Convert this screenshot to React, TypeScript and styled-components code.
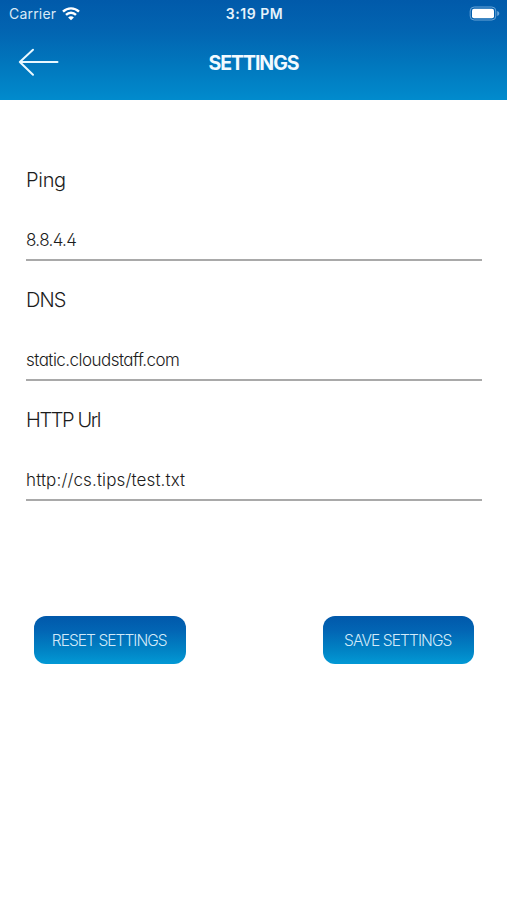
import React from "react";
import styled, { createGlobalStyle } from "styled-components";

const GlobalStyle = createGlobalStyle`
  * { box-sizing: border-box; }
  body { margin: 0; background: #fff; }
`;

const Screen = styled.div`
  width: 507px;
  height: 900px;
  overflow: hidden;
  background: #fff;
  color: #1c1c1c;
  font-family: Inter, "Liberation Sans", sans-serif;
  font-feature-settings: "cv11", "cv02";
`;

const Header = styled.header`
  height: 99.5px;
  color: #fff;
  background: linear-gradient(#015aaa 0%, #0264b1 30%, #0178be 66%, #018bcd 100%);
`;

const StatusBar = styled.div`
  display: grid;
  grid-template-columns: 1fr auto 1fr;
  align-items: center;
  height: 27px;
  padding: 0 7px 0 9px;
`;

const Carrier = styled.div`
  display: flex;
  align-items: center;
  gap: 6px;
  color: #d9e9f6;
  font-size: 14px;
  font-weight: 400;
  font-feature-settings: normal;
  letter-spacing: 0.2px;
  line-height: 27px;
`;

const Clock = styled.div`
  color: #e6f2fb;
  font-size: 14px;
  font-weight: 600;
  letter-spacing: 0.55px;
  line-height: 27px;
`;

const BatteryIcon = styled.svg`
  justify-self: end;
`;

const NavBar = styled.div`
  display: grid;
  grid-template-columns: 1fr auto 1fr;
  align-items: center;
  height: 72px;
  padding: 0 18px;
`;

const BackButton = styled.button`
  display: flex;
  width: 42px;
  height: 30px;
  padding: 0;
  border: 0;
  background: none;
  color: #e9f8ff;
`;

const Title = styled.h1`
  margin: 0;
  color: #f2faff;
  font-size: 19.5px;
  font-weight: 700;
  letter-spacing: -1.05px;
  line-height: 24px;
`;

const Form = styled.main`
  display: flex;
  flex-direction: column;
  padding: 61.5px 25px 0 26px;
`;

const Field = styled.label`
  display: flex;
  flex-direction: column;
  height: 120px;
`;

const FieldName = styled.span<{ $spacing: number }>`
  height: 38px;
  font-size: 20px;
  font-weight: 350;
  letter-spacing: ${(p) => p.$spacing}px;
  line-height: 39px;
`;

const FieldInput = styled.input<{ $spacing: number }>`
  width: 100%;
  height: 62px;
  padding: 22px 0 0;
  border: 0;
  border-bottom: 2px solid #a9a9a9;
  outline: 0;
  background: transparent;
  color: inherit;
  font-family: inherit;
  font-feature-settings: inherit;
  font-size: 17px;
  font-weight: 350;
  letter-spacing: ${(p) => p.$spacing}px;
`;

const Actions = styled.div`
  display: flex;
  justify-content: space-between;
  padding: 95px 8px 0 8px;
`;

const ActionButton = styled.button<{ $spacing: number }>`
  width: 151.5px;
  height: 48px;
  padding: 1px 1px 0 0;
  border: 0;
  border-radius: 12px;
  background: linear-gradient(#0158aa 0%, #0265b4 30%, #0182c4 70%, #0299d5 100%);
  color: #d2eaf9;
  font-family: inherit;
  font-size: 15.5px;
  font-weight: 300;
  letter-spacing: ${(p) => p.$spacing}px;
  white-space: nowrap;
`;

const fields = [
  { name: "Ping", value: "8.8.4.4", nameSpacing: -0.3, valueSpacing: -0.65 },
  { name: "DNS", value: "static.cloudstaff.com", nameSpacing: -0.95, valueSpacing: -0.53 },
  { name: "HTTP Url", value: "http://cs.tips/test.txt", nameSpacing: -1.4, valueSpacing: 0.12 },
];

export default function App() {
  return (
    <Screen>
      <GlobalStyle />
      <Header>
        <StatusBar>
          <Carrier>
            Carrier
            <svg width="18" height="14" viewBox="0 0 18 14" fill="none" stroke="#fff" strokeWidth="2.4">
              <path d="M1 4.6 C5.5 .3 12.5 .3 17 4.6" />
              <path d="M4 7.9 C6.9 5 11.1 5 14 7.9" />
              <path d="M9 13.2 L6.1 10.4 C7.8 8.8 10.2 8.8 11.9 10.4 Z" fill="#fff" stroke="none" />
            </svg>
          </Carrier>
          <Clock>3:19 PM</Clock>
          <BatteryIcon width="31" height="15" viewBox="0 0 31 15">
            <rect x="1.2" y="1" width="25.6" height="13" rx="4" fill="none" stroke="#6aa5d8" />
            <rect x="3" y="2.8" width="22" height="9.4" rx="2" fill="#fff" />
            <path d="M28.2 5 C31 6.2 31 8.8 28.2 10 Z" fill="#6aa5d8" />
          </BatteryIcon>
        </StatusBar>
        <NavBar>
          <BackButton aria-label="Back">
            <svg width="42" height="30" viewBox="0 0 42 30" fill="none" stroke="currentColor" strokeWidth="2" strokeLinecap="round" strokeLinejoin="round">
              <path d="M15 1.8 L1.8 14 L15 26.8 M1.8 14 H39.5" />
            </svg>
          </BackButton>
          <Title>SETTINGS</Title>
        </NavBar>
      </Header>
      <Form>
        {fields.map((f) => (
          <Field key={f.name}>
            <FieldName $spacing={f.nameSpacing}>{f.name}</FieldName>
            <FieldInput $spacing={f.valueSpacing} defaultValue={f.value} />
          </Field>
        ))}
        <Actions>
          <ActionButton $spacing={-0.95}>RESET SETTINGS</ActionButton>
          <ActionButton $spacing={-0.9}>SAVE SETTINGS</ActionButton>
        </Actions>
      </Form>
    </Screen>
  );
}
